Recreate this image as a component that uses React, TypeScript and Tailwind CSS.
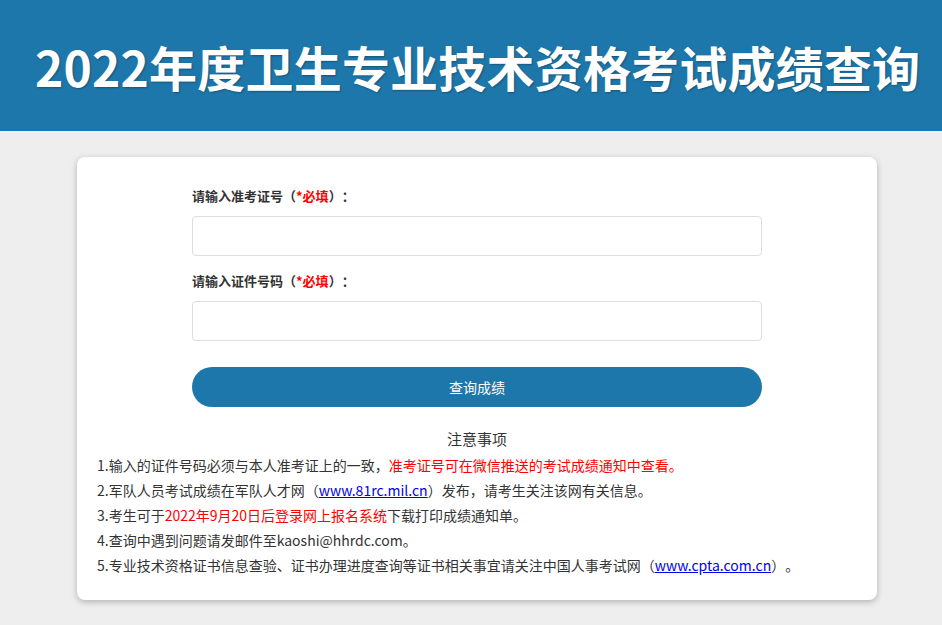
const FONT = "font-['Microsoft_YaHei','Noto_Sans_CJK_SC',sans-serif]";

function Field({ label }: { label: string }) {
  return (
    <div className="flex flex-col">
      <label className="text-[13px] font-bold leading-[22px] text-[#333]">
        {label}（<span className="text-[#ff0000]">*必填</span>）：
      </label>
      <input
        type="text"
        className="mt-[9px] h-[40px] w-full rounded-[4px] border border-[#dddddd] bg-white px-3 outline-none"
      />
    </div>
  );
}

export default function App() {
  return (
    <div className={`min-h-[625px] bg-[#eeeeee] [text-spacing-trim:space-all] ${FONT}`}>
      {/* HEADER */}
      <header className="flex h-[131px] items-center bg-[#1e77aa] pl-[35px]">
        <h1 className="whitespace-nowrap text-[48px] font-bold leading-none tracking-[0.2px] text-white [text-shadow:1px_1px_2px_rgba(0,0,0,0.3)]">
          2022年度卫生专业技术资格考试成绩查询
        </h1>
      </header>

      {/* CARD */}
      <main className="pt-[26px] pb-[25px]">
        <div className="ml-[77px] w-[800px] rounded-[8px] bg-white px-[20px] pt-[28px] pb-[22px] shadow-[0_2px_6px_rgba(0,0,0,0.25)]">
          <div className="mx-auto flex w-[570px] flex-col">
            <Field label="请输入准考证号" />
            <div className="mt-[14px]">
              <Field label="请输入证件号码" />
            </div>
            <button className="mt-[26px] h-[40px] w-full rounded-full bg-[#1e77aa] text-[14px] text-white">
              查询成绩
            </button>
          </div>

          <h3 className="mt-[22px] text-center text-[15px] leading-[20px] text-[#333]">注意事项</h3>
          <ul className="mt-[4px] text-[14px] leading-[25px] text-[#333]">
            <li>
              1.输入的证件号码必须与本人准考证上的一致，
              <span className="text-[#ff0000]">准考证号可在微信推送的考试成绩通知中查看。</span>
            </li>
            <li>
              2.军队人员考试成绩在军队人才网（
              <a href="#" className="text-[#0000ee] underline">www.81rc.mil.cn</a>
              ）发布，请考生关注该网有关信息。
            </li>
            <li>
              3.考生可于<span className="text-[#ff0000]">2022年9月20日后登录网上报名系统</span>下载打印成绩通知单。
            </li>
            <li>4.查询中遇到问题请发邮件至kaoshi@hhrdc.com。</li>
            <li>
              5.专业技术资格证书信息查验、证书办理进度查询等证书相关事宜请关注中国人事考试网（
              <a href="#" className="text-[#0000ee] underline">www.cpta.com.cn</a>
              ）。
            </li>
          </ul>
        </div>
      </main>
    </div>
  );
}
